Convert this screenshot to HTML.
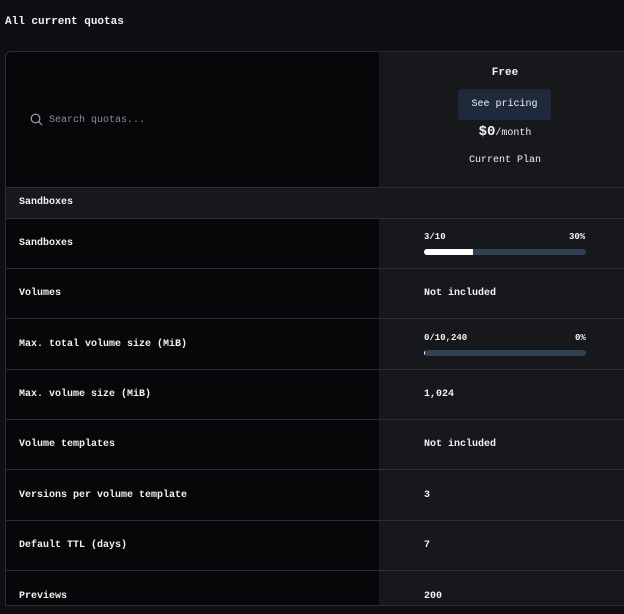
<!DOCTYPE html>
<html><head><style>
*{margin:0;padding:0;box-sizing:border-box}
body{width:624px;height:614px;background:#0f0f13;font-family:"Liberation Mono","DejaVu Sans Mono",monospace;color:#f2f2f2;position:relative;overflow:hidden;font-size:10px}
.t{position:absolute;left:5px;top:16px;font-size:11px;font-weight:bold}
.box{position:absolute;left:5px;top:51px;width:640px;height:555px;border:1px solid #2a2d38;border-radius:6px 0 0 0;overflow:hidden;background:#070709}
.rc{position:absolute;left:373px;top:0;width:300px;height:100%;background:#16181c}
.hl{position:absolute;left:0;width:100%;height:1px;background:#2c2f3b}
.sec{position:absolute;left:0;top:136px;width:100%;height:31px;background:#16181c}
.lab{position:absolute;left:13px;font-weight:bold;font-size:10px;margin-top:2px}
.val{position:absolute;left:418px;font-weight:bold;font-size:10px;margin-top:2px}
.bar{position:absolute;left:418px;width:162px;height:6px;border-radius:3px;background:#334155;overflow:hidden}
.c{position:absolute;left:373px;width:252px;text-align:center;font-weight:bold;margin-top:2px}
</style></head><body>
<div class="t">All current quotas</div>
<div class="box">
<div class="rc"></div>
<div class="sec"></div>
<div class="hl" style="top:135px"></div>
<div class="hl" style="top:166px"></div>
<div class="hl" style="top:216px"></div>
<div class="hl" style="top:266px"></div>
<div class="hl" style="top:317px"></div>
<div class="hl" style="top:367px"></div>
<div class="hl" style="top:417px"></div>
<div class="hl" style="top:468px"></div>
<div class="hl" style="top:518px"></div>
<div class="hl" style="top:553px"></div>
<svg style="position:absolute;left:24px;top:61px" width="13" height="13" viewBox="0 0 13 13" fill="none" stroke="#9aa0a8" stroke-width="1.2"><circle cx="5.5" cy="5.5" r="4.3"/><path d="M8.7 8.7L12 12"/></svg>
<div style="position:absolute;left:43px;top:63px;color:#8a8f97;font-size:10px">Search quotas...</div>
<div class="c" style="top:13px;font-size:11px">Free</div>
<div style="position:absolute;left:452px;top:37px;width:93px;height:31px;background:#1e293b;border-radius:3px;text-align:center;line-height:31px;font-size:10px">See pricing</div>
<div class="c" style="top:70px;font-size:14px">$0<span style="font-size:10px;font-weight:normal">/month</span></div>
<div class="c" style="top:101px;font-size:10px;font-weight:normal">Current Plan</div>
<div class="lab" style="top:143px">Sandboxes</div>
<div class="lab" style="top:184px">Sandboxes</div>
<div class="val" style="top:178px;font-size:9px">3/10</div>
<div class="val" style="top:178px;left:563px;font-size:9px">30%</div>
<div class="bar" style="top:197px"><div style="width:49px;height:6px;background:#fff"></div></div>
<div class="lab" style="top:234px">Volumes</div>
<div class="val" style="top:234px">Not included</div>
<div class="lab" style="top:285px">Max. total volume size (MiB)</div>
<div class="val" style="top:279px;font-size:9px">0/10,240</div>
<div class="val" style="top:279px;left:569px;font-size:9px">0%</div>
<div class="bar" style="top:298px"><div style="width:1px;height:6px;background:#fff"></div></div>
<div class="lab" style="top:335px">Max. volume size (MiB)</div>
<div class="val" style="top:335px">1,024</div>
<div class="lab" style="top:385px">Volume templates</div>
<div class="val" style="top:385px">Not included</div>
<div class="lab" style="top:436px">Versions per volume template</div>
<div class="val" style="top:436px">3</div>
<div class="lab" style="top:486px">Default TTL (days)</div>
<div class="val" style="top:486px">7</div>
<div class="lab" style="top:537px">Previews</div>
<div class="val" style="top:537px">200</div>
</div>
</body></html>
